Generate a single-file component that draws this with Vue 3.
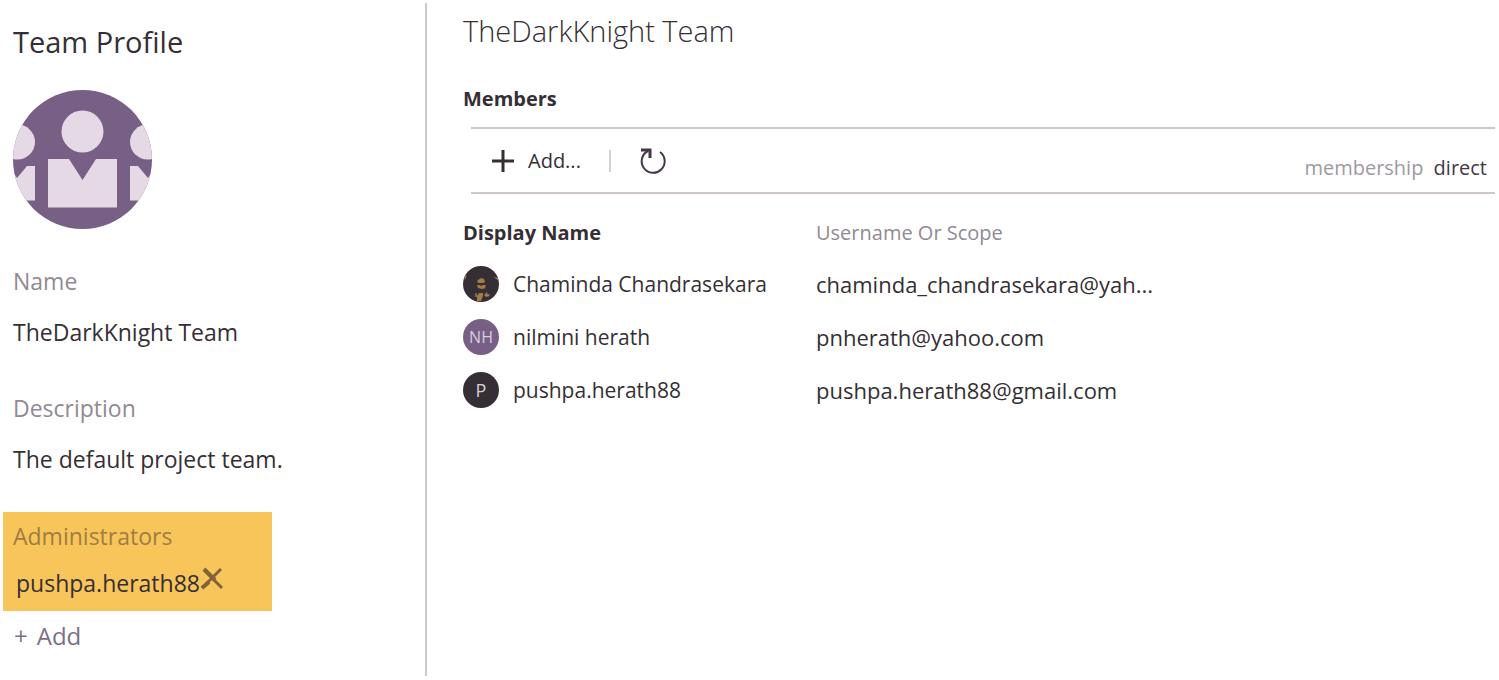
<script setup>
const members = [
  { name: 'Chaminda Chandrasekara', user: 'chaminda_chandrasekara@yah...', kind: 'photo', initials: '' },
  { name: 'nilmini herath', user: 'pnherath@yahoo.com', kind: 'purple', initials: 'NH' },
  { name: 'pushpa.herath88', user: 'pushpa.herath88@gmail.com', kind: 'dark', initials: 'P' }
]
</script>

<template>
  <div class="page">
    <aside class="profile">
      <h1>Team Profile</h1>
      <svg class="team-avatar" viewBox="0 0 139 139" role="img" aria-label="Team picture">
        <defs>
          <clipPath id="disc"><circle cx="69.5" cy="69.5" r="69.5" /></clipPath>
        </defs>
        <g clip-path="url(#disc)">
          <rect width="139" height="139" fill="#775f86" />
          <g fill="#e4d9e4">
            <circle cx="69.5" cy="41.5" r="21" />
            <path d="M35 69H56L69.5 90L83 69H104V117.5H35Z" />
            <circle cx="4.5" cy="52" r="17.5" />
            <circle cx="134.5" cy="52" r="17.5" />
            <path d="M-20 76H-4L4 88L14 76H22V110.5H-20Z" />
            <path d="M159 76H143L135 88L125 76H117V110.5H159Z" />
          </g>
        </g>
      </svg>

      <dl>
        <dt>Name</dt>
        <dd>TheDarkKnight Team</dd>
        <dt>Description</dt>
        <dd>The default project team.</dd>
      </dl>

      <section class="admins">
        <h2>Administrators</h2>
        <div class="admin">
          <span>pushpa.herath88</span>
          <button type="button" class="remove" aria-label="Remove pushpa.herath88">
            <svg viewBox="0 0 24 24" width="24" height="24">
              <path d="M4 3L22 21" stroke-width="3" />
              <path d="M21 2L2 21" stroke-width="3" />
              <path d="M4 2L15 13M2 21L9 15" stroke-width="4" />
            </svg>
          </button>
        </div>
      </section>
      <button type="button" class="add-admin"><span>+</span> <span>Add</span></button>
    </aside>

    <main class="team">
      <h2 class="team-name">TheDarkKnight Team</h2>
      <h3>Members</h3>
      <div class="toolbar">
        <button type="button" class="add-member">
          <svg viewBox="0 0 22 22" width="22" height="22"><path d="M11 0V22M0 11H22" stroke="#352f35" stroke-width="3" /></svg>
          Add...
        </button>
        <span class="divider"></span>
        <button type="button" class="refresh" aria-label="Refresh">
          <svg viewBox="0 0 28 28" width="28" height="28" fill="none" stroke="#443747" stroke-width="2">
            <path d="M21 5A11.5 11.5 0 1 1 9 4" />
            <path d="M2 3H11V11" stroke-width="3" />
          </svg>
        </button>
        <button type="button" class="membership">membership <span>direct</span></button>
      </div>

      <table>
        <thead>
          <tr>
            <th scope="col" class="name-col">Display Name</th>
            <th scope="col" class="user-col">Username Or Scope</th>
          </tr>
        </thead>
        <tbody>
          <tr v-for="m in members" :key="m.user">
            <td>
              <div class="person">
                <span class="avatar" :class="m.kind">
                  <svg v-if="m.kind === 'photo'" viewBox="0 0 36 36" width="36" height="36">
                    <g fill="#a07d42">
                      <path d="M15 14L18 12L21 13L22 16L20 17H16L14 16Z" />
                      <path d="M14 19H17L18 20L20 19H23L22 21L23 22L19 23L15 22Z" />
                      <path d="M16 27H20V30L18 35H14V31L11 30L15 29Z" />
                      <path d="M21 29L24 26L25 30L23 31Z" />
                      <path d="M30 11L35 12L35 14ZM1 11L4 9L2 14Z" />
                    </g>
                    <path d="M12 28L14 27L13 30ZM24 29L27 28L25 31Z" fill="#a493ad" />
                  </svg>
                  <template v-else>{{ m.initials }}</template>
                </span>
                {{ m.name }}
              </div>
            </td>
            <td class="user">{{ m.user }}</td>
          </tr>
        </tbody>
      </table>
    </main>
  </div>
</template>

<style>
body {
  background: #fff;
}
</style>

<style scoped>
.page {
  display: flex;
  min-height: 100vh;
  padding: 3px 4px 4px 3px;
  box-sizing: border-box;
  font-family: 'Open Sans', 'Noto Sans', sans-serif;
  font-size: 23px;
  line-height: 32px;
  color: #352f35;
}
h1, h2, h3, dl, dd {
  margin: 0;
  font-weight: 400;
}
button {
  padding: 0;
  border: 0;
  background: none;
  font: inherit;
  color: inherit;
  cursor: pointer;
}
svg {
  display: block;
}
.profile {
  flex: 0 0 422px;
  border-right: 2px solid #cfc6d0;
}
h1 {
  padding: 19px 10px 28px;
  font-size: 29px;
  line-height: 40px;
}
.team-avatar {
  width: 139px;
  height: 139px;
  margin-left: 10px;
}
dl {
  padding: 27px 10px 2px;
  line-height: 51px;
}
dt {
  color: #918a94;
}
dd {
  margin-bottom: 25px;
}
.admins {
  width: 269px;
  padding: 8px 10px 12px;
  box-sizing: border-box;
  background: #f8c55b;
}
.admins h2 {
  font-size: 23px;
  color: #a07d42;
}
.admin {
  display: flex;
  margin-top: 15px;
  padding-left: 3px;
}
.remove {
  align-self: flex-start;
  height: 24px;
}
.remove svg {
  fill: none;
  stroke: #806439;
}
.add-admin {
  display: flex;
  gap: 9px;
  margin: 9px 11px 0;
  font-size: 24px;
  color: #7d6f86;
}
.team {
  flex: 1;
  min-width: 0;
  padding-left: 36px;
}
.team-name {
  padding-top: 8px;
  font-size: 29px;
  font-weight: 300;
  line-height: 40px;
}
h3 {
  padding: 32px 0 12px;
  font-size: 20px;
  font-weight: 700;
}
.toolbar {
  display: flex;
  align-items: center;
  height: 67px;
  margin-left: 8px;
  padding: 0 8px 0 21px;
  box-sizing: border-box;
  border-top: 2px solid #cfc6d0;
  border-bottom: 2px solid #cfc6d0;
  font-size: 20px;
}
.add-member {
  display: flex;
  align-items: center;
  gap: 14px;
}
.divider {
  width: 2px;
  height: 22px;
  margin: 0 28px;
  background: #d8ced9;
}
.membership {
  margin: 14px 0 0 auto;
  color: #a198a4;
}
.membership span {
  margin-left: 5px;
  color: #443747;
}
table {
  margin-top: 14px;
  border-collapse: collapse;
  font-size: 21px;
}
th, td {
  padding: 0;
  text-align: left;
  height: 53px;
  white-space: nowrap;
}
th {
  height: 49px;
  font-size: 20px;
}
.name-col {
  width: 353px;
}
.user-col {
  font-weight: 400;
  color: #918a94;
}
.user {
  font-size: 22px;
}
.person {
  display: flex;
  align-items: center;
  gap: 14px;
}
.avatar {
  width: 36px;
  height: 36px;
  border-radius: 50%;
  overflow: hidden;
  background: #352f35;
  color: #d8ced9;
  font-size: 18px;
  line-height: 36px;
  text-align: center;
}
.avatar.purple {
  background: #775f86;
  font-size: 16px;
}
</style>
